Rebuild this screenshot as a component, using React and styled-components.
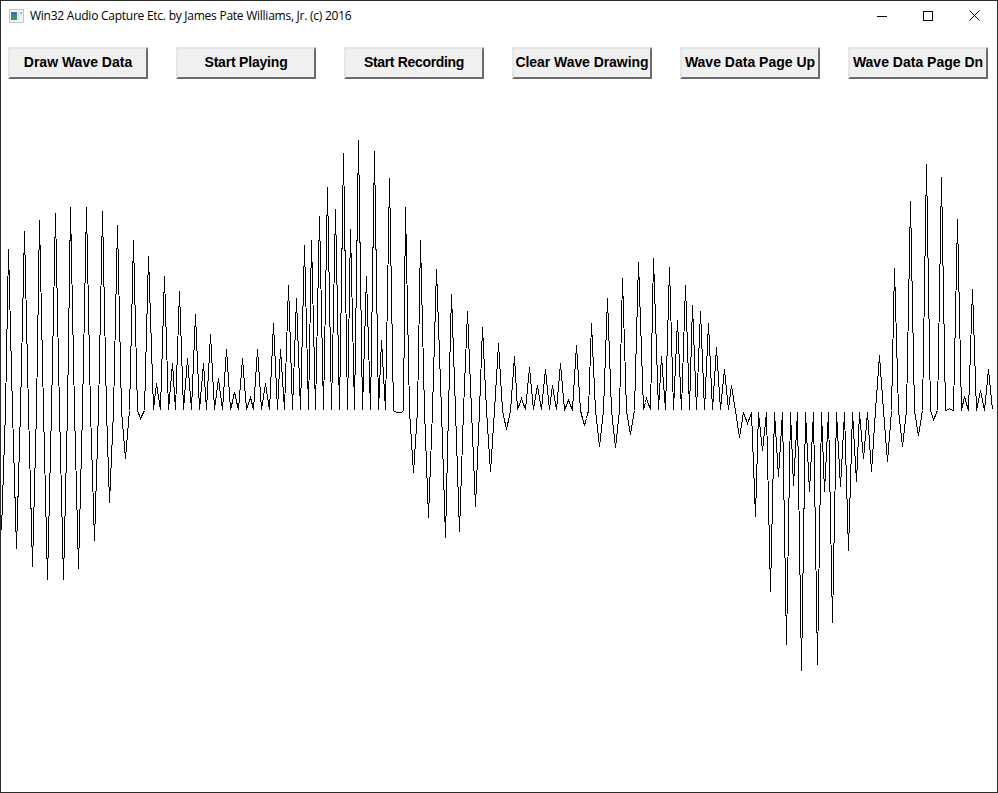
import React from "react";
import styled, { createGlobalStyle } from "styled-components";

const Global = createGlobalStyle`
  html, body {
    margin: 0;
    padding: 0;
    background: #fff;
    overflow: hidden;
  }
`;

const Win = styled.div`
  box-sizing: border-box;
  width: 998px;
  height: 793px;
  display: flex;
  flex-direction: column;
  border: 1px solid #2b2b2b;
  background: #fff;
`;

const TitleBar = styled.div`
  height: 29px;
  display: flex;
  align-items: center;
  padding-left: 8px;
  flex: none;
`;

const TitleText = styled.span`
  margin-left: 6px;
  font-family: "Open Sans", "Noto Sans", sans-serif;
  font-size: 12px;
  letter-spacing: -0.25px;
  color: #000;
  white-space: nowrap;
`;

const Controls = styled.div`
  margin-left: auto;
  display: flex;
`;

const Ctl = styled.div`
  width: 46px;
  height: 29px;
  display: flex;
  align-items: center;
  justify-content: center;
`;

const Toolbar = styled.div`
  flex: none;
  display: flex;
  gap: 28px;
  padding: 17px 0 0 7px;
`;

const Btn = styled.button`
  box-sizing: border-box;
  width: 140px;
  height: 32px;
  padding: 0 0 2px;
  background: #f0f0f0;
  border: 0;
  border-top: 2px solid #e6e6e6;
  border-left: 2px solid #e6e6e6;
  border-right: 2px solid #6e6e6e;
  border-bottom: 2px solid #6e6e6e;
  font-family: "Liberation Sans", Arial, sans-serif;
  font-weight: 700;
  font-size: 14px;
  letter-spacing: ${p => p.$spacing}px;
  color: #000;
  white-space: nowrap;
`;

const Canvas = styled.svg`
  display: block;
  flex: 1;
  width: 996px;
  min-height: 0;
`;

const BUTTONS = [
  { label: "Draw Wave Data", spacing: 0 },
  { label: "Start Playing", spacing: -0.2 },
  { label: "Start Recording", spacing: -0.33 },
  { label: "Clear Wave Drawing", spacing: -0.06 },
  { label: "Wave Data Page Up", spacing: 0 },
  { label: "Wave Data Page Dn", spacing: 0 },
];

const BASE = 410;
const F = 409; // floor of the clipped wave
const T = 412; // top of the clipped negative part

// turning points of the wave, read off the screen
const EXTREMA = [
  [1,530],[8,249],[16,548],[24,231],[32,566],[39,220],[47,579],[55,213],[63,579],[70,207],[78,568],[86,207],
  [94,540],[102,211],[109,502],[117,225],[125,458],[133,240],[140,418],[148,256],[153,F],[156,383],[160,F],
  [164,276],[168,F],[172,363],[175,F],[179,291],[183,F],[187,358],[191,F],[195,314],[199,F],[203,363],[206,F],
  [210,334],[214,F],[218,378],[222,F],[226,349],[230,F],[234,392],[238,F],[242,358],[246,F],[250,397],[253,F],
  [257,349],[261,F],[265,383],[269,F],[273,323],[277,F],[280,349],[284,F],[288,285],[292,F],[296,298],[300,F],
  [304,245],[308,F],[311,240],[315,F],[319,216],[323,F],[327,187],[331,F],[335,209],[339,F],[343,153],[347,F],
  [350,229],[354,F],[358,140],[362,F],[366,276],[370,F],[374,151],[378,F],[381,340],[385,F],[389,178],[393,410],
  [396,412],[401,412],[405,207],[413,472],[420,240],[428,517],[436,269],[445,537],[451,294],[459,531],[467,311],
  [475,506],[482,327],[490,471],[498,343],[506,429],[514,356],[517,F],[521,398],[525,F],[529,367],[533,F],
  [537,385],[541,F],[545,369],[549,F],[552,385],[556,F],[560,363],[564,F],[568,400],[572,F],[576,345],[584,425],
  [591,323],[599,446],[607,298],[615,447],[622,278],[630,434],[638,262],[643,F],[646,398],[650,F],[653,258],
  [658,F],[661,356],[665,F],[669,267],[673,F],[677,320],[681,F],[685,285],[689,F],[692,305],[696,F],[700,311],
  [704,F],[708,323],[712,F],[716,347],[720,F],[724,369],[728,F],[731,385],[739,437],[743,412],[747,423],[751,T],
  [755,516],[758,T],[762,450],[766,T],[770,591],[774,T],[778,476],[782,T],[786,644],[790,T],[793,485],[797,T],
  [801,670],[805,T],[809,491],[813,T],[817,664],[821,T],[824,491],[828,T],[832,622],[836,T],[840,486],[844,T],
  [848,550],[852,T],[856,481],[859,T],[863,458],[867,T],[871,471],[879,355],[887,461],[894,268],[902,446],
  [910,201],[918,435],[926,164],[933,419],[941,177],[945,410],[949,408],[953,410],[957,219],[961,410],[964,396],
  [968,410],[972,289],[976,410],[980,390],[984,410],[988,369],[992,409],
];

// a swing through the baseline has a knee there, halfway along
function withKnees(list) {
  const out = [];
  for (let i = 0; i < list.length - 1; i++) {
    const [x0, y0] = list[i];
    const [x1, y1] = list[i + 1];
    out.push(list[i]);
    const crosses = (y0 < BASE - 1 && y1 > BASE + 1) || (y0 > BASE + 1 && y1 < BASE - 1);
    if (crosses && x1 - x0 > 2) out.push([Math.round((x0 + x1) / 2), BASE]);
  }
  out.push(list[list.length - 1]);
  return out;
}

function wavePoints() {
  const knots = withKnees(EXTREMA);
  const pts = [];
  for (let i = 0; i < knots.length - 1; i++) {
    const [x0, y0] = knots[i];
    const [x1, y1] = knots[i + 1];
    for (let x = x0; x < x1; x++) {
      const y = Math.round(y0 + ((y1 - y0) * (x - x0)) / (x1 - x0));
      pts.push(`${x + 0.5},${y + 0.5}`);
    }
  }
  const last = knots[knots.length - 1];
  pts.push(`${last[0] + 0.5},${last[1] + 0.5}`);
  return pts.join(" ");
}

function AppIcon() {
  return (
    <svg width="15" height="14" viewBox="0 0 15 14" shapeRendering="crispEdges">
      <rect x="0.5" y="0.5" width="14" height="13" fill="#f4f4f4" stroke="#c4c4c4" />
      <rect x="2" y="3" width="6" height="8" fill="#3c8c84" />
      <rect x="2" y="3" width="6" height="3" fill="#3f6fa8" />
      <rect x="9" y="3" width="1" height="8" fill="#cfd8d2" />
      <rect x="11" y="3" width="2" height="2" fill="#8fc0a0" />
    </svg>
  );
}

export default function App() {
  return (
    <Win>
      <Global />
      <TitleBar>
        <AppIcon />
        <TitleText>Win32 Audio Capture Etc. by James Pate Williams, Jr. (c) 2016</TitleText>
        <Controls>
          <Ctl>
            <svg width="10" height="10" viewBox="0 0 10 10" shapeRendering="crispEdges">
              <path d="M0 5.5H10" stroke="#000" />
            </svg>
          </Ctl>
          <Ctl>
            <svg width="10" height="10" viewBox="0 0 10 10" shapeRendering="crispEdges">
              <rect x="0.5" y="0.5" width="9" height="9" fill="none" stroke="#000" />
            </svg>
          </Ctl>
          <Ctl>
            <svg width="11" height="11" viewBox="0 0 11 11">
              <path d="M0.5 0.5L10.5 10.5M10.5 0.5L0.5 10.5" stroke="#000" fill="none" />
            </svg>
          </Ctl>
        </Controls>
      </TitleBar>
      <Toolbar>
        {BUTTONS.map(b => (
          <Btn key={b.label} $spacing={b.spacing}>{b.label}</Btn>
        ))}
      </Toolbar>
      <Canvas viewBox="1 79 996 713" preserveAspectRatio="xMinYMin">
        <polyline
          points={wavePoints()}
          fill="none"
          stroke="#000"
          strokeWidth="1"
          shapeRendering="crispEdges"
        />
      </Canvas>
    </Win>
  );
}
